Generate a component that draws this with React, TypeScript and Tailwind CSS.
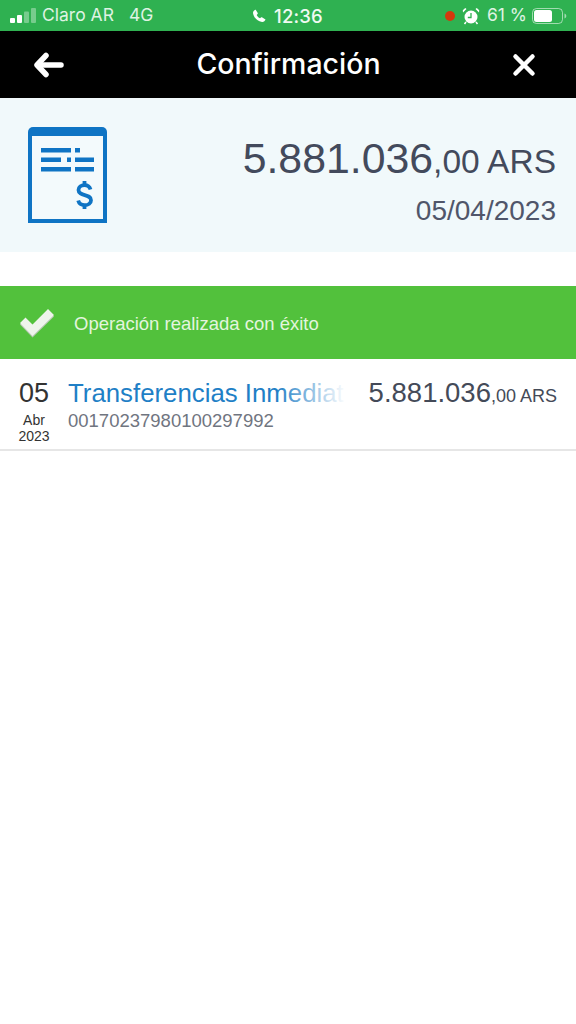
import React from "react";

function Signal() {
  return (
    <svg width="26" height="16" viewBox="0 0 26 16" className="block">
      <rect x="0" y="10" width="5" height="5" rx="1" fill="#fff" />
      <rect x="7" y="7" width="5" height="8" rx="1" fill="#fff" />
      <rect x="14" y="3.5" width="5" height="11.5" rx="1" fill="#fff" fillOpacity="0.35" />
      <rect x="21" y="0" width="5" height="15" rx="1" fill="#fff" fillOpacity="0.35" />
    </svg>
  );
}

function Phone() {
  return (
    <svg width="14" height="14" viewBox="0 0 24 24" className="block">
      <path
        d="M6.6 1.5 9.8 7c.3.6.2 1.200-.3 1.700L8 10.200c1.200 2.500 3.300 4.600 5.800 5.800l1.500-1.500c.5-.5 1.100-.6 1.700-.3l5.500 3.200c.6.300.7 1 .3 1.600-1.300 2.200-3.300 3.500-5.600 3.200C9.400 21.200 2.800 14.600 1.800 7.300 1.500 5 2.800 3 5 1.700c.6-.4 1.300-.8 1.600-.2Z"
        fill="#fff"
      />
    </svg>
  );
}

function Alarm() {
  return (
    <svg width="18" height="18" viewBox="0 0 18 18" className="block">
      <circle cx="9" cy="10" r="6.500" fill="#fff" />
      <path d="M1 5.500 4.500 2 3.200 1 .8 3.200Z M17 5.500 13.500 2l1.300-1 2.400 2.200Z" fill="#fff" />
      <path d="M9 6v4.500H5.800" stroke="#2fb151" strokeWidth="1.300" fill="none" />
      <path d="M4 15l-1.500 2M14 15l1.500 2" stroke="#fff" strokeWidth="1.500" />
    </svg>
  );
}

function Battery() {
  return (
    <svg width="35" height="16" viewBox="0 0 35 16" className="block">
      <rect x="0.500" y="0.500" width="30" height="15" rx="4" fill="none" stroke="#fff" strokeOpacity="0.55" />
      <rect x="2" y="2" width="18" height="12" rx="2.500" fill="#fff" />
      <path d="M32.500 5.500c1.300.4 1.800 1.300 1.800 2.500s-.5 2.100-1.800 2.500Z" fill="#fff" fillOpacity="0.55" />
    </svg>
  );
}

function BackArrow() {
  return (
    <svg width="32" height="26" viewBox="0 0 32 26" className="block">
      <path d="M13 3.500 4 13l9 9.500" fill="none" stroke="#fff" strokeWidth="5.500" strokeLinecap="round" strokeLinejoin="round" />
      <path d="M5 13h23" fill="none" stroke="#fff" strokeWidth="5.500" strokeLinecap="round" />
    </svg>
  );
}

function Close() {
  return (
    <svg width="24" height="24" viewBox="0 0 24 24" className="block">
      <path d="M3.500 3.500 20.500 20.500M20.500 3.500 3.500 20.500" stroke="#fff" strokeWidth="4.500" strokeLinecap="round" fill="none" />
    </svg>
  );
}

function Receipt() {
  return (
    <svg width="82" height="98" viewBox="0 0 82 98" className="block">
      <path d="M1 97V6a5 5 0 0 1 5-5h69a5 5 0 0 1 5 5v91H1Z" fill="#0f74c4" />
      <rect x="5" y="10" width="71" height="83" fill="#f3fafc" />
      <g fill="#0f74c4">
        <rect x="14" y="22" width="30" height="4.500" />
        <rect x="48" y="22" width="5" height="4.500" />
        <rect x="14" y="31.500" width="20" height="4.500" />
        <rect x="40" y="31.500" width="4" height="4.500" />
        <rect x="48" y="31.500" width="19" height="4.500" />
        <rect x="14" y="41" width="30" height="4.500" />
        <rect x="48" y="41" width="19" height="4.500" />
      </g>
      <path
        d="M63.500 63.500c-.8-2.800-2.800-4.300-6-4.300-3.500 0-6 1.900-6 4.800 0 6.800 12.500 3.400 12.500 10.200 0 3.100-2.700 5-6.300 5-3.400 0-5.700-1.700-6.500-4.600"
        fill="none"
        stroke="#0f74c4"
        strokeWidth="3.800"
      />
      <path d="M57.500 55v5M57.500 78v5" stroke="#0f74c4" strokeWidth="3.800" fill="none" />
    </svg>
  );
}

function Check() {
  return (
    <svg width="36" height="30" viewBox="0 0 36 30" className="block">
      <path d="M1 16.500 6.500 11l7 7L29 2.500l6 6-21.500 21Z" fill="#b9c9b5" />
      <path d="M1 15 6.500 9.500l7 7L29 1l6 6-21.500 21Z" fill="#eef4ec" />
    </svg>
  );
}

export default function App() {
  return (
    <div className="min-h-[1024px] w-[576px] bg-white font-['Liberation_Sans',Arial,sans-serif]">
      <div className="relative flex h-[31px] items-center justify-between bg-[#2fb151] pl-[10px] pr-[9px] font-['Inter',sans-serif] text-[17.500px] text-[#dff3e3]">
        <div className="flex items-center">
          <Signal />
          <span className="ml-[6px]">Claro AR</span>
          <span className="ml-[15px]">4G</span>
        </div>
        <div className="absolute left-[252px] top-[6px] flex items-center gap-[8px] text-[18.500px] font-medium text-[#f0faf2]">
          <Phone />
          <span className="leading-[20px] tracking-[0.2px]">12:36</span>
        </div>
        <div className="flex items-center">
          <span className="h-[10px] w-[10px] rounded-full bg-[#d4380d]" />
          <span className="ml-[7px]"><Alarm /></span>
          <span className="ml-[7px] mr-[5px]">61 %</span>
          <Battery />
        </div>
      </div>

      <div className="flex h-[67px] items-center justify-between bg-black pl-[33px] pr-[40px]">
        <BackArrow />
        <span className="font-['Inter',sans-serif] text-[28.500px] font-medium leading-none text-white">Confirmación</span>
        <Close />
      </div>

      <div className="flex h-[154px] items-center justify-between bg-[#f1f9fb] pl-[27px] pr-[20px]">
        <Receipt />
        <div className="flex flex-col items-end pt-[12px] text-[#434a5c]">
          <div className="flex items-baseline leading-none">
            <span className="text-[42.800px]">5.881.036</span>
            <span className="text-[33.500px]">,00 ARS</span>
          </div>
          <span className="mt-[17px] text-[28px] leading-none text-[#50566a]">05/04/2023</span>
        </div>
      </div>

      <div className="mt-[34px] flex h-[73px] items-center bg-[#52c13c] pl-[19px]">
        <Check />
        <span className="ml-[19px] pt-[2px] text-[18.500px] text-[#e3f5de]">Operación realizada con éxito</span>
      </div>

      <div className="flex h-[92px] border-b-2 border-[#e6e6e6] pl-[18px] pr-[19px]">
        <div className="flex w-[32px] shrink-0 flex-col items-center pt-[19px] text-[#333]">
          <span className="text-[27px] leading-[30px]">05</span>
          <span className="mt-[5px] text-[14px] leading-[14px]">Abr</span>
          <span className="mt-[1px] text-[14px] leading-[16px]">2023</span>
        </div>
        <div className="relative ml-[18px] w-[278px] shrink-0 overflow-hidden pt-[18px]">
          <div className="whitespace-nowrap text-[25.800px] leading-[32px] text-[#1f7fc6]">Transferencias Inmediat</div>
          <div className="mt-[2px] whitespace-nowrap text-[18.500px] leading-[20px] text-[#70757f]">00170237980100297992</div>
          <div className="absolute right-0 top-[14px] h-[40px] w-[70px] bg-gradient-to-r from-transparent to-white" />
        </div>
        <div className="ml-auto flex items-baseline whitespace-nowrap pt-[18px] leading-[32px] text-[#444a58]">
          <span className="text-[27.500px]">5.881.036</span>
          <span className="text-[18px]">,00 ARS</span>
        </div>
      </div>
    </div>
  );
}
